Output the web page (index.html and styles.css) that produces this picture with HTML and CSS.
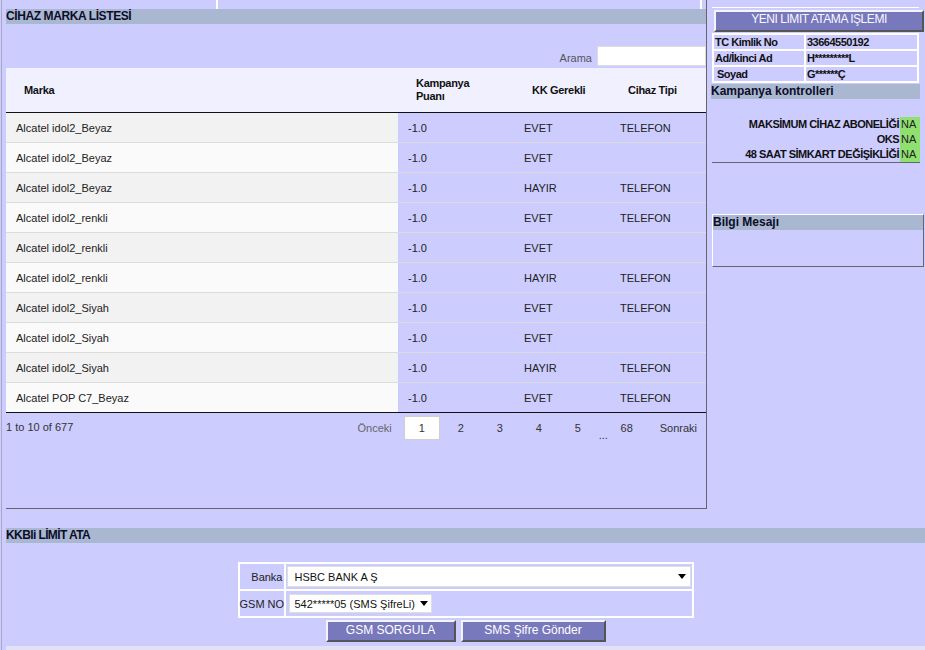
FILE: index.html
```html
<!DOCTYPE html>
<html lang="tr">
<head>
<meta charset="utf-8">
<title>Cihaz Marka Listesi</title>
<link rel="stylesheet" href="styles.css">
</head>
<body>
<div class="page">
  <div class="top">
    <div class="left-panel">
      <div class="topstrip"><div class="ts-a"></div><div class="ts-b"></div></div>
      <div class="bar">CİHAZ MARKA LİSTESİ</div>
      <div class="search"><span class="search-label">Arama</span><div class="search-input"></div></div>
      <table class="grid">
        <colgroup><col class="c1"><col class="c2"><col class="c3"><col class="c4"></colgroup>
        <thead>
          <tr><th>Marka</th><th>Kampanya<br>Puanı</th><th>KK Gerekli</th><th>Cihaz Tipi</th></tr>
        </thead>
        <tbody>
          <tr><td>Alcatel idol2_Beyaz</td><td>-1.0</td><td>EVET</td><td>TELEFON</td></tr>
          <tr><td>Alcatel idol2_Beyaz</td><td>-1.0</td><td>EVET</td><td></td></tr>
          <tr><td>Alcatel idol2_Beyaz</td><td>-1.0</td><td>HAYIR</td><td>TELEFON</td></tr>
          <tr><td>Alcatel idol2_renkli</td><td>-1.0</td><td>EVET</td><td>TELEFON</td></tr>
          <tr><td>Alcatel idol2_renkli</td><td>-1.0</td><td>EVET</td><td></td></tr>
          <tr><td>Alcatel idol2_renkli</td><td>-1.0</td><td>HAYIR</td><td>TELEFON</td></tr>
          <tr><td>Alcatel idol2_Siyah</td><td>-1.0</td><td>EVET</td><td>TELEFON</td></tr>
          <tr><td>Alcatel idol2_Siyah</td><td>-1.0</td><td>EVET</td><td></td></tr>
          <tr><td>Alcatel idol2_Siyah</td><td>-1.0</td><td>HAYIR</td><td>TELEFON</td></tr>
          <tr><td>Alcatel POP C7_Beyaz</td><td>-1.0</td><td>EVET</td><td>TELEFON</td></tr>
        </tbody>
      </table>
      <div class="pager">
        <div class="pager-info">1 to 10 of 677</div>
        <div class="paginate">
          <span class="pbtn prev">Önceki</span>
          <span class="pbtn num current">1</span>
          <span class="pbtn num">2</span>
          <span class="pbtn num">3</span>
          <span class="pbtn num">4</span>
          <span class="pbtn num">5</span>
          <span class="ellipsis">...</span>
          <span class="pbtn num last">68</span>
          <span class="pbtn next">Sonraki</span>
        </div>
      </div>
    </div>
    <div class="right-panel">
      <div class="rp-line"></div>
      <div class="rp-btn">YENI LIMIT ATAMA IŞLEMI</div>
      <table class="info">
        <colgroup><col class="i1"><col class="i2"></colgroup>
        <tr><td class="k">TC Kimlik No</td><td>33664550192</td></tr>
        <tr><td class="k">Ad/İkinci Ad</td><td>H*********L</td></tr>
        <tr><td class="k soy">Soyad</td><td>G******Ç</td></tr>
      </table>
      <div class="bar rp-bar">Kampanya kontrolleri</div>
      <div class="checks">
        <div class="chk"><span class="chk-l">MAKSİMUM CİHAZ ABONELİĞİ</span><span class="na">NA</span></div>
        <div class="chk"><span class="chk-l">OKS</span><span class="na">NA</span></div>
        <div class="chk"><span class="chk-l">48 SAAT SİMKART DEĞİŞİKLİĞİ</span><span class="na">NA</span></div>
      </div>
      <div class="bilgi">
        <div class="bar bilgi-bar">Bilgi Mesajı</div>
      </div>
    </div>
  </div>
  <div class="kkb">
    <div class="bar kkb-bar">KKBli LİMİT ATA</div>
    <table class="form">
      <colgroup><col class="f1"><col class="f2"></colgroup>
      <tr>
        <td class="lbl">Banka</td>
        <td><div class="sel sel-bank"><span>HSBC BANK A Ş</span><svg class="arrow" width="8" height="5" viewBox="0 0 8 5"><path d="M0 0H8L4 5Z" fill="#000"/></svg></div></td>
      </tr>
      <tr>
        <td class="lbl">GSM NO</td>
        <td><div class="sel sel-gsm"><span>542*****05 (SMS ŞifreLi)</span><svg class="arrow" width="8" height="5" viewBox="0 0 8 5"><path d="M0 0H8L4 5Z" fill="#000"/></svg></div></td>
      </tr>
    </table>
    <div class="actions">
      <div class="btn btn-gsm">GSM SORGULA</div>
      <div class="btn btn-sms">SMS Şifre Gönder</div>
    </div>
    <div class="strip"></div>
  </div>
</div>
</body>
</html>
```
FILE: styles.css
```css
* { box-sizing: border-box; }
html, body { margin: 0; padding: 0; }
body {
  background: #ccccff;
  font-family: "Liberation Sans", Arial, sans-serif;
  font-size: 11px;
  color: #222;
  width: 925px;
  height: 650px;
  overflow: hidden;
}
.page {
  margin-left: 1px;
  border-left: 1px solid #a8a8c4;
  height: 650px;
}
.top { display: flex; align-items: flex-start; }

/* left panel */
.left-panel {
  margin-left: 4px;
  width: 701px;
  height: 509px;
  border-right: 1px solid #666;
  border-bottom: 1px solid #666;
  display: flex;
  flex-direction: column;
}
.topstrip { height: 9px; display: flex; }
.ts-a { width: 212px; border-right: 2px solid #fff; }
.ts-b { flex: 1; margin-right: 4px; border-right: 2px solid #fff; }

.bar {
  height: 15px;
  line-height: 15px;
  background: #a9b7d0;
  color: #0d0d2a;
  font-weight: bold;
  font-size: 12px;
  white-space: nowrap;
  overflow: hidden;
}
.left-panel > .bar { letter-spacing: -0.4px; }

.search {
  height: 44px;
  display: flex;
  justify-content: flex-end;
  align-items: flex-end;
  padding-bottom: 2px;
}
.search-label { color: #555; line-height: 13px; padding-bottom: 1px; margin-right: 5px; }
.search-input { width: 109px; height: 20px; background: #fff; border: 1px solid #dcdcdc; }

.grid {
  width: 700px;
  table-layout: fixed;
  border-collapse: separate;
  border-spacing: 0;
}
.grid .c1 { width: 392px; }
.grid .c2 { width: 116px; }
.grid .c3 { width: 96px; }
.grid .c4 { width: 96px; }
.grid th {
  height: 45px;
  background: #f0f0ff;
  border-bottom: 1px solid #111;
  text-align: left;
  font-weight: bold;
  font-size: 11px;
  line-height: 13px;
  letter-spacing: -0.3px;
  color: #111;
  padding: 0 0 0 18px;
  vertical-align: middle;
}
.grid td {
  height: 30px;
  padding: 0 10px;
  border-bottom: 1px solid #dcdcdc;
  color: #222;
  white-space: nowrap;
  vertical-align: middle;
}
.grid tbody tr:nth-child(odd) td:first-child { background: #f2f2f2; }
.grid tbody tr:nth-child(even) td:first-child { background: #fafafa; }
.grid tbody tr:last-child td { border-bottom-color: #111; }

.pager {
  flex: 1;
  display: flex;
  justify-content: space-between;
  align-items: flex-start;
}
.pager-info { color: #333; line-height: 13px; padding-top: 8px; }
.paginate { display: flex; align-items: flex-start; margin-top: 3px; }
.pbtn {
  height: 24px;
  line-height: 22px;
  border: 1px solid transparent;
  color: #333;
  text-align: center;
}
.prev { color: #666; padding: 0 8px 0 11px; }
.num { width: 36px; margin-left: 3px; }
.prev + .num { margin-left: 3px; }
.current { background: #fff; border-color: #cfcfcf; }
.ellipsis { margin-left: 3px; width: 9px; line-height: 24px; padding-top: 7px; color: #333; }
.num.last { margin-left: 1px; }
.next { margin-left: 3px; padding: 0 8px 0 11px; }

/* right panel */
.right-panel {
  margin-left: 4px;
  width: 214px;
  display: flex;
  flex-direction: column;
}
.rp-line { margin: 7px 0 0 1px; width: 207px; height: 1px; background: #fff; }
.rp-btn {
  margin: 2px 0 0 3px;
  width: 210px;
  height: 22px;
  background: #7878bc;
  border: 2px solid;
  border-color: #f4f4f4 #555 #555 #f4f4f4;
  color: #f8f8ff;
  font-size: 12px;
  letter-spacing: -0.45px;
  line-height: 15px;
  text-align: center;
  white-space: nowrap;
}
.info {
  margin: 1px 0 0 1px;
  width: 207px;
  table-layout: fixed;
  border-spacing: 2px;
  background: #fff;
}
.info .i1 { width: 90px; }
.info td {
  height: 14px;
  padding: 0 0 0 1px;
  line-height: 14px;
  background: #ccccff;
  font-weight: bold;
  color: #111;
  letter-spacing: -0.5px;
  white-space: nowrap;
  overflow: hidden;
}
.info td.soy { padding-left: 3px; }
.rp-bar { margin-top: 1px; width: 209px; letter-spacing: 0; }
.checks {
  margin: 18px 0 0 1px;
  width: 208px;
  border-bottom: 1px solid #666;
}
.chk { display: flex; justify-content: flex-end; height: 15px; line-height: 15px; }
.chk-l { font-weight: bold; letter-spacing: -0.5px; color: #111; padding-right: 1px; white-space: nowrap; }
.na { width: 20px; background: #8fe06f; padding-left: 1px; color: #222; }
.bilgi {
  margin: 51px 0 0 1px;
  width: 212px;
  height: 53px;
  border: 1px solid;
  border-color: #fff #666 #666 #fff;
}
.bilgi-bar { letter-spacing: 0; }

/* KKB section */
.kkb { margin: 19px 0 0 4px; display: flex; flex-direction: column; }
.kkb-bar { letter-spacing: -0.6px; }
.form {
  margin: 19px auto 0;
  width: 456px;
  table-layout: fixed;
  border-spacing: 2px;
  background: #fff;
}
.form .f1 { width: 44px; }
.form td { height: 25px; padding: 0; background: #ccccff; vertical-align: middle; }
.form td.lbl { text-align: right; padding-right: 1px; color: #222; white-space: nowrap; }
.sel {
  display: flex;
  align-items: center;
  justify-content: space-between;
  background: #fff;
  border: 1px solid #dedede;
  color: #111;
  white-space: nowrap;
}
.sel-bank { width: 404px; height: 21px; margin-left: 1px; padding: 0 4px 0 7px; }
.sel-gsm { width: 143px; height: 19px; margin-left: 3px; padding: 0 3px 0 5px; }
.arrow { display: block; flex: none; }
.actions { display: flex; justify-content: center; gap: 5px; margin-top: 2px; }
.btn {
  height: 22px;
  background: #7878bc;
  border: 2px solid;
  border-color: #f4f4f4 #555 #555 #f4f4f4;
  color: #fff;
  font-size: 12px;
  line-height: 16px;
  text-align: center;
  white-space: nowrap;
}
.btn-gsm { width: 130px; }
.btn-sms { width: 145px; }
.strip { margin-top: 4px; height: 10px; background: #e2e2f4; }
```
